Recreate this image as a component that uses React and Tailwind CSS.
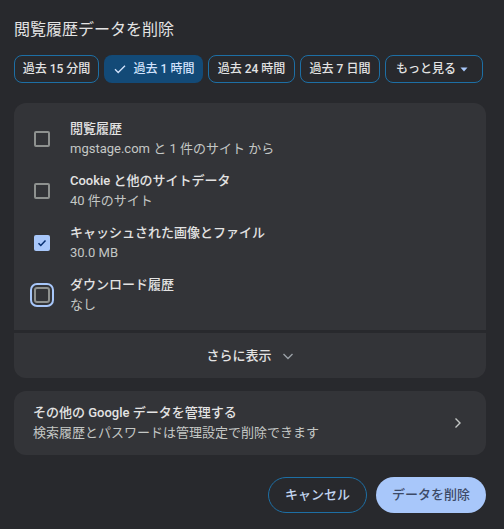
import React from "react";

const ranges = [
  { label: "過去 15 分間", w: "w-[85px]" },
  { label: "過去 1 時間", w: "w-[99px]", selected: true },
  { label: "過去 24 時間", w: "w-[87px]" },
  { label: "過去 7 日間", w: "w-[80px]" },
];

const items = [
  { title: "閲覧履歴", sub: "mgstage.com と 1 件のサイト から" },
  { title: "Cookie と他のサイトデータ", sub: "40 件のサイト" },
  { title: "キャッシュされた画像とファイル", sub: "30.0 MB", checked: true },
  { title: "ダウンロード履歴", sub: "なし", focused: true },
];

const Checkbox = ({ checked, focused }) => {
  if (checked) {
    return (
      <div className="flex h-[16px] w-[16px] items-center justify-center rounded-[2px] bg-[#a8c7fa]">
        <svg width="12" height="12" viewBox="0 0 12 12" fill="none">
          <path d="M2.5 6.2l2.3 2.3 4.7-4.9" stroke="#062e6f" strokeWidth="1.5" />
        </svg>
      </div>
    );
  }
  return (
    <div
      className={`h-[16px] w-[16px] rounded-[2px] border-2 border-[#8e918f] ${
        focused ? "outline-2 outline-offset-2 outline-[#a8c7fa] rounded-[3px]" : ""
      }`}
    />
  );
};

export default function App() {
  return (
    <div className="h-[529px] w-[504px] bg-[#28292d] px-[14px] pt-[18px] font-['Roboto','Noto_Sans_CJK_JP',sans-serif] text-[#e3e3e3]">
      <h1 className="text-[16px] leading-[24px]">閲覧履歴データを削除</h1>

      {/* time range chips */}
      <div className="mt-[13px] flex gap-[5px]">
        {ranges.map((r) => (
          <button
            key={r.label}
            className={`flex h-[28px] ${r.w} items-center justify-center gap-[7px] whitespace-nowrap rounded-[8px] text-[12px] font-medium ${
              r.selected
                ? "bg-[#134a77] text-[#d3e3fd]"
                : "border border-[#1d6fa5] text-[#e3e3e3]"
            }`}
          >
            {r.selected && (
              <svg width="14" height="14" viewBox="0 0 14 14" fill="none">
                <path d="M2 7.3l3.2 3.2L12 3.7" stroke="#d3e3fd" strokeWidth="1.3" />
              </svg>
            )}
            {r.label}
          </button>
        ))}
        <button className="flex h-[28px] w-[98px] items-center justify-between whitespace-nowrap rounded-[8px] border border-[#1d6fa5] pl-[10px] pr-[14px] text-[12px] font-medium text-[#e3e3e3]">
          もっと見る
          <svg width="8" height="5" viewBox="0 0 8 5">
            <path d="M0.5 0.5h7L4 4.5z" fill="#a8c7fa" />
          </svg>
        </button>
      </div>

      {/* data types card */}
      <div className="mt-[20px] flex w-[472px] flex-col gap-[3px]">
        <div className="rounded-t-[12px] bg-[#333438] pb-[9px] pt-[10px]">
          {items.map((it) => (
            <div key={it.title} className="flex h-[52px] items-center gap-[20px] pl-[20px]">
              <Checkbox checked={it.checked} focused={it.focused} />
              <div className="flex flex-col">
                <span className="text-[13px] font-medium leading-[20px]">{it.title}</span>
                <span className="text-[13px] leading-[20px] text-[#c4c7c5]">{it.sub}</span>
              </div>
            </div>
          ))}
        </div>
        <div className="flex h-[45px] items-center justify-center gap-[10px] rounded-b-[12px] bg-[#333438] text-[13px] font-medium">
          さらに表示
          <svg width="12" height="12" viewBox="0 0 12 12" fill="none">
            <path d="M1.5 4L6 8.5 10.5 4" stroke="#9aa0a6" strokeWidth="1.4" />
          </svg>
        </div>
      </div>

      {/* google data card */}
      <div className="mt-[13px] flex h-[64px] w-[472px] items-center justify-between rounded-[12px] bg-[#333438] pl-[19px] pr-[24px]">
        <div className="flex flex-col">
          <span className="text-[13px] font-medium leading-[20px]">その他の Google データを管理する</span>
          <span className="text-[13px] leading-[20px] text-[#c4c7c5]">検索履歴とパスワードは管理設定で削除できます</span>
        </div>
        <svg width="8" height="12" viewBox="0 0 8 12" fill="none">
          <path d="M1.5 1.5L6 6l-4.5 4.5" stroke="#c4c7c5" strokeWidth="1.4" />
        </svg>
      </div>

      {/* actions */}
      <div className="mt-[22px] flex w-[472px] justify-end gap-[9px]">
        <button className="h-[36px] w-[99px] rounded-full border border-[#1d6fa5] text-[13px] font-medium text-[#c2d5f0]">
          キャンセル
        </button>
        <button className="h-[36px] w-[110px] rounded-full bg-[#a8c7fa] text-[13px] font-medium text-[#3d4a66]">
          データを削除
        </button>
      </div>
    </div>
  );
}
